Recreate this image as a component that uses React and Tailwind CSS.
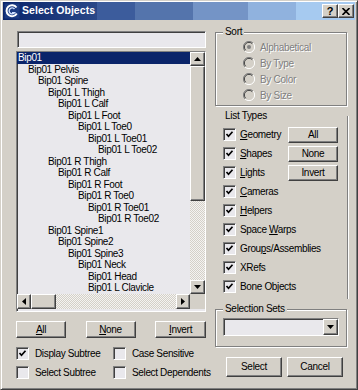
import React from 'react';

const FONT = "font-['Liberation_Sans',Arial,sans-serif]";
const raised = 'border border-t-white border-l-white border-r-[#404040] border-b-[#404040] shadow-[inset_-1px_-1px_0_#808080]';
const sunken = 'border border-t-[#808080] border-l-[#808080] border-b-white border-r-white shadow-[inset_1px_1px_0_#404040]';
const etched = 'border border-[#808080] shadow-[inset_1px_1px_0_#fff,1px_1px_0_#fff]';
const disabledText = 'text-[#808080] [text-shadow:1px_1px_0_#fff]';
const track = 'bg-[repeating-conic-gradient(#d4d0c8_0_25%,#f4f3f1_0_50%)] bg-[length:2px_2px]';

const nodes = [
  ['Bip01', 0], ['Bip01 Pelvis', 1], ['Bip01 Spine', 2], ['Bip01 L Thigh', 3],
  ['Bip01 L Calf', 4], ['Bip01 L Foot', 5], ['Bip01 L Toe0', 6], ['Bip01 L Toe01', 7],
  ['Bip01 L Toe02', 8], ['Bip01 R Thigh', 3], ['Bip01 R Calf', 4], ['Bip01 R Foot', 5],
  ['Bip01 R Toe0', 6], ['Bip01 R Toe01', 7], ['Bip01 R Toe02', 8], ['Bip01 Spine1', 3],
  ['Bip01 Spine2', 4], ['Bip01 Spine3', 5], ['Bip01 Neck', 6], ['Bip01 Head', 7],
  ['Bip01 L Clavicle', 7],
];

function Arrow({ dir }) {
  const pts = {
    up: '0,4 3.5,0 7,4',
    down: '0,0 7,0 3.5,4',
    left: '4,0 4,7 0,3.5',
    right: '0,0 0,7 4,3.5',
  }[dir];
  const vertical = dir === 'up' || dir === 'down';
  return (
    <svg width={vertical ? 7 : 4} height={vertical ? 4 : 7} viewBox={vertical ? '0 0 7 4' : '0 0 4 7'}>
      <polygon points={pts} fill="#000" />
    </svg>
  );
}

function Check({ checked }) {
  return (
    <span className={`${sunken} w-[13px] h-[13px] shrink-0 bg-[#e9e8ec] flex items-center justify-center`}>
      {checked && (
        <svg width="9" height="9" viewBox="0 0 9 9">
          <polyline points="1.5,4 3.5,6.2 7.5,1.8" fill="none" stroke="#000" strokeWidth="1.7" />
        </svg>
      )}
    </span>
  );
}

function Radio({ on }) {
  return (
    <svg width="12" height="12" viewBox="0 0 12 12" className="shrink-0">
      <circle cx="6" cy="6" r="5" fill="#d4d0c8" />
      <path d="M10 2 A5.5 5.5 0 0 0 2 10" fill="none" stroke="#808080" strokeWidth="1" />
      <path d="M9.3 2.7 A4.5 4.5 0 0 0 2.7 9.3" fill="none" stroke="#404040" strokeWidth="1" />
      <path d="M2 10 A5.5 5.5 0 0 0 10 2" fill="none" stroke="#fff" strokeWidth="1" />
      {on && <circle cx="6" cy="6" r="2" fill="#808080" />}
    </svg>
  );
}

function Btn({ children, className = '' }) {
  return (
    <button className={`${raised} bg-[#d4d0c8] text-[10px] leading-none tracking-[-0.3px] text-black flex items-center justify-center ${className}`}>
      {children}
    </button>
  );
}

function Group({ label, className = '', children }) {
  return (
    <div className={`relative ${etched} ${className}`}>
      <span className="absolute -top-[7px] left-[7px] px-[2px] bg-[#d4d0c8] text-[10px] leading-[12px] tracking-[-0.3px]">{label}</span>
      {children}
    </div>
  );
}

const types = [
  [<><u>G</u>eometry</>, 'All'],
  [<><u>S</u>hapes</>, 'None'],
  [<><u>L</u>ights</>, 'Invert'],
  [<><u>C</u>ameras</>],
  [<><u>H</u>elpers</>],
  [<>Space <u>W</u>arps</>],
  [<>Grou<u>p</u>s/Assemblies</>],
  [<>XRefs</>],
  [<>Bone Objects</>],
];

export default function App() {
  return (
    <div className={`${FONT} w-[358px] h-[390px] bg-[#d4d0c8] text-black border border-t-[#d4d0c8] border-l-[#d4d0c8] border-r-[#404040] border-b-[#404040] shadow-[inset_1px_1px_0_#fff,inset_-1px_-1px_0_#808080] p-[2px] pt-[1px] overflow-hidden select-none`}>
      {/* Title bar */}
      <div className="h-[18px] flex items-center pl-[1px] pr-[1px] bg-[linear-gradient(to_right,#0a246a_0px,#2a4888_94px,#3c5c9c_94px,#3c5c9c_132px,#5474ac_132px,#5474ac_190px,#7494c6_190px,#7494c6_245px,#90b2de_245px,#90b2de_293px,#a6caf0_293px)]">
        <svg width="16" height="16" viewBox="0 0 16 16" className="shrink-0">
          <rect x="0.5" y="0.5" width="15" height="15" fill="#1c3b82" />
          <path d="M12.5 4.5 A5.5 5.5 0 1 0 12.8 10.5" fill="none" stroke="#fff" strokeWidth="2" />
          <path d="M10.5 6 A3 3 0 1 0 10.6 9.6 L8 9.6" fill="none" stroke="#cfe0ff" strokeWidth="1.4" />
        </svg>
        <span className="ml-[2px] text-white font-bold text-[10.5px] tracking-[0.05px]">Select Objects</span>
        <div className="ml-auto flex">
          <button className={`${raised} bg-[#d4d0c8] w-[16px] h-[14px] flex items-center justify-center text-[11px] font-bold leading-none`}>?</button>
          <button className={`${raised} bg-[#d4d0c8] w-[16px] h-[14px] flex items-center justify-center`}>
            <svg width="8" height="7" viewBox="0 0 8 7">
              <path d="M0.5 0 L7.5 7 M7.5 0 L0.5 7" stroke="#000" strokeWidth="1.6" />
            </svg>
          </button>
        </div>
      </div>

      <div className="flex">
        {/* Left column */}
        <div className="ml-[13px] mt-[11px] w-[190px] flex flex-col">
          <div className={`${sunken} h-[17px] ml-[1px] bg-[#e9e8ec]`} />
          <div className={`${sunken} mt-[3px] h-[261px] bg-[#e9e8ec] flex flex-col`}>
            <div className="flex h-[242px]">
              <div className="flex-1 overflow-hidden text-[10px] tracking-[-0.35px]">
                {nodes.map(([name, level], i) => (
                  <div
                    key={i}
                    className={`h-[11.5px] leading-[11.5px] whitespace-nowrap ${i === 0 ? 'bg-[#0a246a] text-white' : ''}`}
                    style={{ paddingLeft: 1 + level * 10 }}
                  >
                    {name}
                  </div>
                ))}
              </div>
              <div className="w-[15px] flex flex-col">
                <div className={`${raised} bg-[#d4d0c8] h-[14px] flex items-center justify-center`}><Arrow dir="up" /></div>
                <div className={`${raised} bg-[#d4d0c8] h-[135px]`} />
                <div className={`${track} flex-1`} />
                <div className={`${raised} bg-[#d4d0c8] h-[14px] flex items-center justify-center`}><Arrow dir="down" /></div>
              </div>
            </div>
            <div className="flex h-[15px]">
              <div className={`${raised} bg-[#d4d0c8] w-[14px] flex items-center justify-center`}><Arrow dir="left" /></div>
              <div className={`${raised} bg-[#d4d0c8] w-[25px]`} />
              <div className={`${track} flex-1`} />
              <div className={`${raised} bg-[#d4d0c8] w-[14px] flex items-center justify-center`}><Arrow dir="right" /></div>
              <div className="w-[15px] bg-[#d4d0c8]" />
            </div>
          </div>
          <div className="mt-[9px] flex justify-between">
            <Btn className="w-[50px] h-[17px]"><u>A</u>ll</Btn>
            <Btn className="w-[50px] h-[17px]"><u>N</u>one</Btn>
            <Btn className="w-[51px] h-[17px]"><u>I</u>nvert</Btn>
          </div>
          <div className="mt-[9px] grid grid-cols-[97px_93px] gap-y-[6px] text-[10px] tracking-[-0.35px] whitespace-nowrap">
            <label className="h-[13px] flex items-center gap-[6px]"><Check checked />Display Subtree</label>
            <label className="h-[13px] flex items-center gap-[6px]"><Check />Case Sensitive</label>
            <label className="h-[13px] flex items-center gap-[6px]"><Check />Select Subtree</label>
            <label className="h-[13px] flex items-center gap-[6px]"><Check />Select Dependents</label>
          </div>
        </div>

        {/* Right column */}
        <div className="ml-[9px] mt-[12px] w-[133px] flex flex-col">
          <Group label="Sort" className="h-[74px] w-[132px]">
            <div className={`pt-[6px] pl-[27px] flex flex-col text-[10px] tracking-[-0.3px] ${disabledText}`}>
              {[['Alphabetical', true], ['By Type'], ['By Color'], ['By Size']].map(([t, on]) => (
                <div key={t} className="h-[16px] flex items-center gap-[5px]">
                  <Radio on={on} />
                  <span>{t}</span>
                </div>
              ))}
            </div>
          </Group>

          <div className="mt-[10px] h-[183px] border-r border-r-[#808080] shadow-[1px_0_0_#fff]">
            <div className="-mt-[6px] ml-[10px] text-[10px] leading-[12px] tracking-[-0.3px]">List Types</div>
            <div className="mt-[3px] flex flex-col text-[10px] tracking-[-0.35px]">
              {types.map(([label, btn], i) => (
                <div key={i} className="h-[19px] flex items-center pl-[8px] pr-[9px]">
                  <Check checked />
                  <span className="ml-[4px] whitespace-nowrap">{label}</span>
                  {btn && <Btn className="ml-auto w-[50px] h-[16px]">{btn}</Btn>}
                </div>
              ))}
            </div>
          </div>

          <Group label="Selection Sets" className="mt-[10px] h-[38px] w-[132px]">
            <div className={`${sunken} mt-[8px] ml-[7px] w-[116px] h-[18px] bg-[#e9e8ec] flex justify-end`}>
              <div className={`${raised} bg-[#d4d0c8] w-[15px] h-full flex items-center justify-center`}><Arrow dir="down" /></div>
            </div>
          </Group>

          <div className="mt-[10px] ml-[11px] flex gap-[5px]">
            <Btn className="w-[56px] h-[20px] text-[10.5px]">Select</Btn>
            <Btn className="w-[56px] h-[20px] text-[10.5px]">Cancel</Btn>
          </div>
        </div>
      </div>
    </div>
  );
}
